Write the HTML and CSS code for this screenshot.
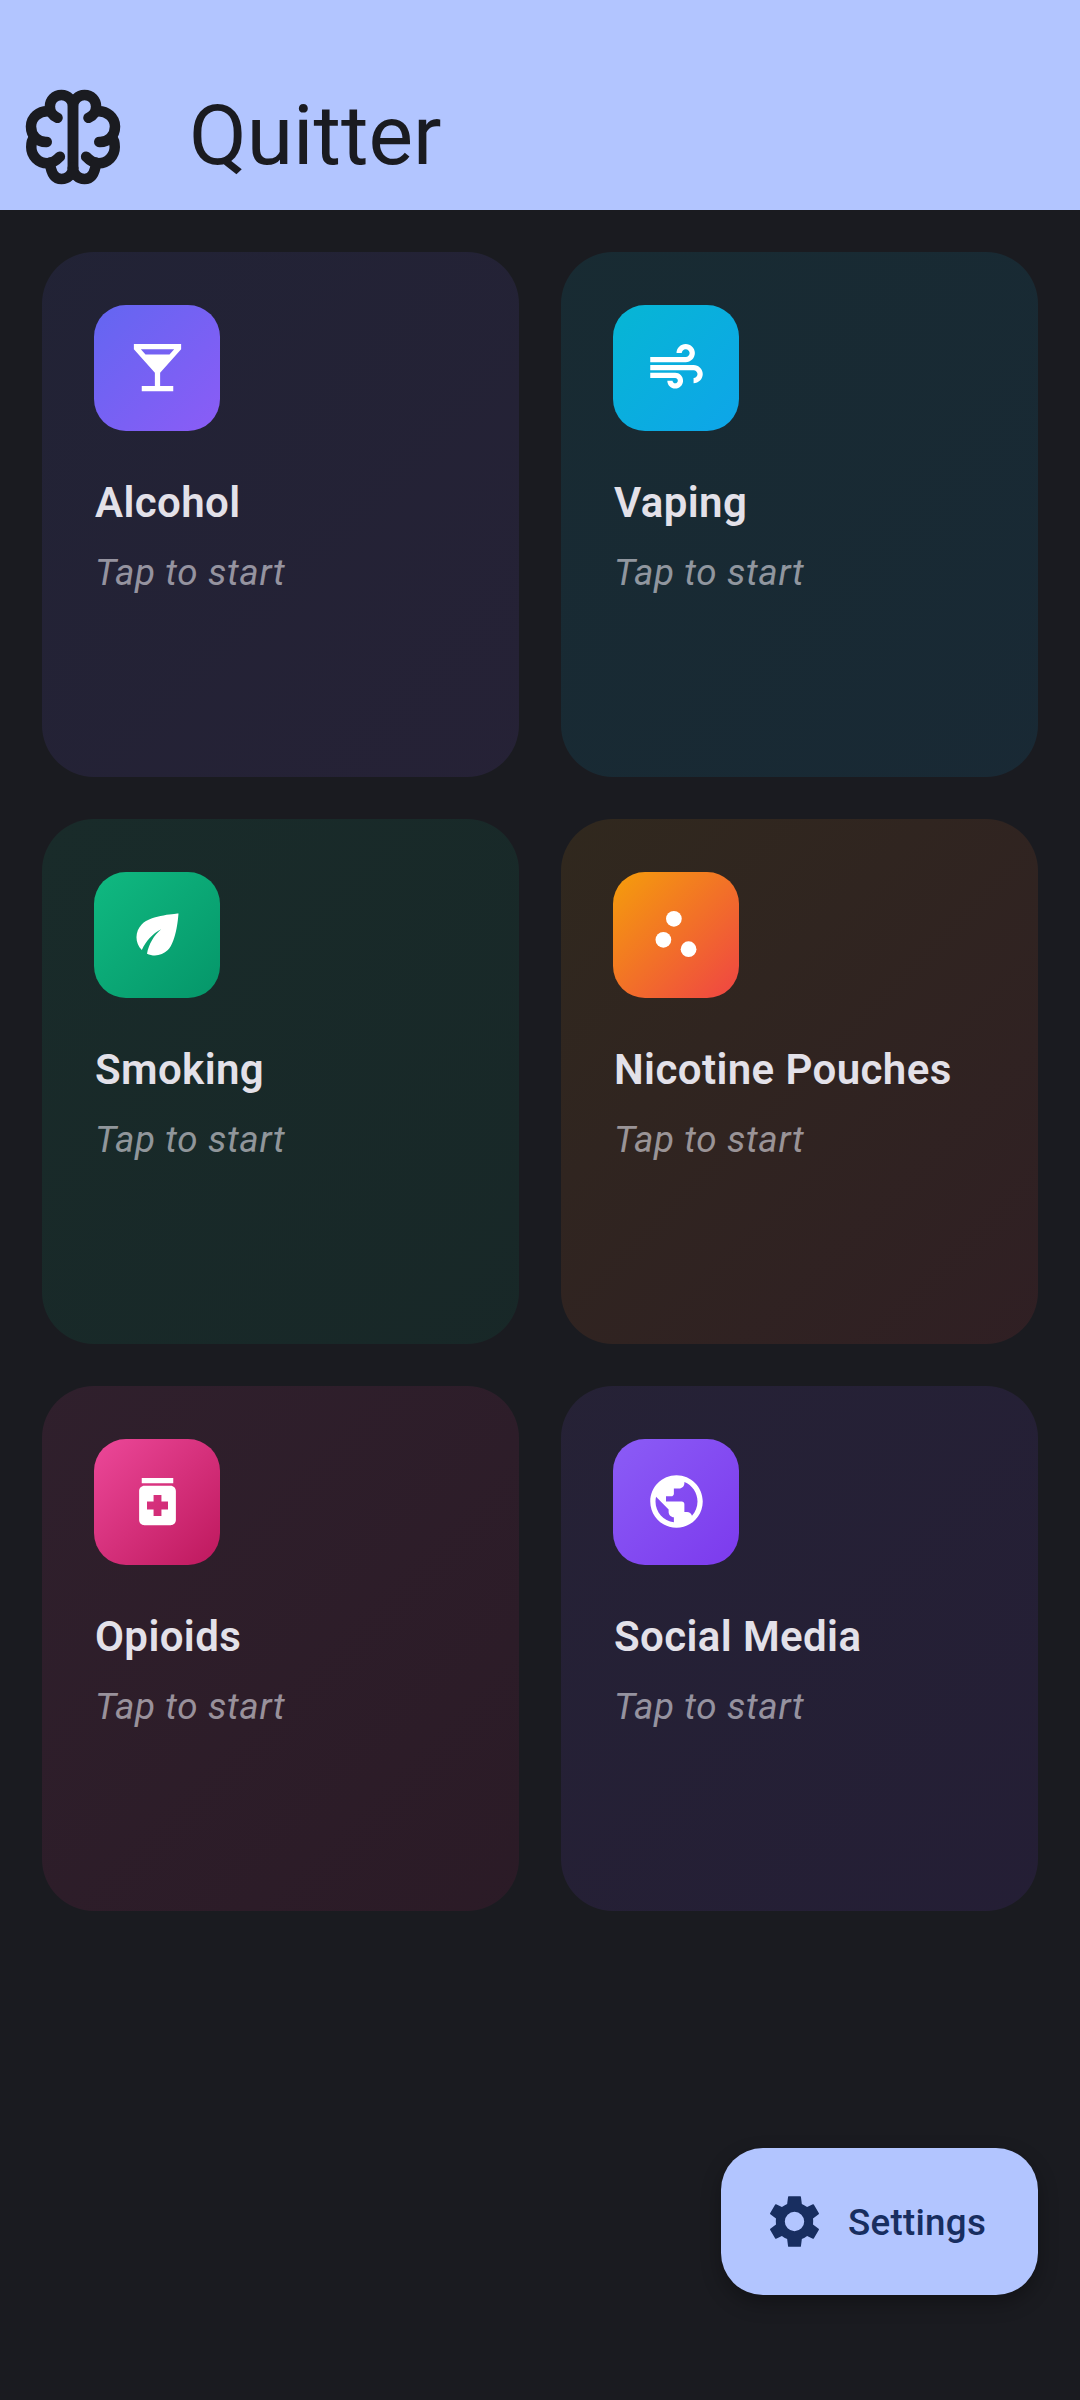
FILE: index.html
```html
<!DOCTYPE html>
<html lang="en">
<head>
<meta charset="utf-8">
<title>Quitter</title>
<link rel="stylesheet" href="styles.css">
</head>
<body>
<header class="app-bar">
  <svg class="logo" viewBox="0 0 24 24">
    <defs>
      <g id="lobe">
        <path d="M12 18V6.2A2.2 2.2 0 0 1 14.2 4C15.5 4 16.4 5 16.4 6.2C16.4 7.4 15.8 8 14.95 8.35"/>
        <path d="M16.5 7.1C18.5 6.9 20 8.3 20 10C20 11.7 18.8 13 17 12.93"/>
        <path d="M19.4 12C19.8 12.5 19.95 13.2 19.95 13.9C19.95 15.6 18.6 17 16.9 17C15.9 17 15.2 16.5 14.5 15.75"/>
        <path d="M16.4 16.9C16.2 18.8 15.5 20 14.2 20C13 20 12 19.1 12 17.8"/>
      </g>
    </defs>
    <use href="#lobe"/>
    <use href="#lobe" transform="matrix(-1 0 0 1 24 0)"/>
  </svg>
  <h1 class="title">Quitter</h1>
</header>
<main class="grid">
  <section class="card alcohol">
    <div class="tile"><svg viewBox="0 0 24 24"><path d="M21 5V3H3v2l8 9v5H6v2h12v-2h-5v-5l8-9zM7.43 7L5.66 5h12.69l-1.78 2H7.43z"/></svg></div>
    <h2 class="name">Alcohol</h2>
    <p class="hint">Tap to start</p>
  </section>
  <section class="card vaping">
    <div class="tile"><svg viewBox="0 0 24 24"><path d="M14.500 17c0 1.650-1.350 3-3 3s-3-1.350-3-3h2c0 .550.450 1 1 1s1-.450 1-1-.450-1-1-1H2v-2h9.500c1.650 0 3 1.350 3 3zM19 6.500C19 4.570 17.430 3 15.500 3S12 4.570 12 6.500h2c0-.830.670-1.500 1.500-1.500s1.500.670 1.500 1.500S16.330 8 15.500 8H2v2h13.500c1.930 0 3.500-1.570 3.500-3.500zM18.500 11H2v2h16.500c.830 0 1.500.670 1.500 1.500s-.670 1.500-1.500 1.500v2c1.930 0 3.500-1.570 3.500-3.500S20.430 11 18.500 11z"/></svg></div>
    <h2 class="name">Vaping</h2>
    <p class="hint">Tap to start</p>
  </section>
  <section class="card smoking">
    <div class="tile"><svg viewBox="0 0 24 24"><path d="M6.050 8.050c-2.730 2.730-2.730 7.150-.020 9.880 1.470-3.400 4.090-6.240 7.360-7.930-2.770 2.340-4.710 5.610-5.390 9.320 2.600 1.230 5.800.780 7.950-1.370C19.430 14.470 20 4 20 4S9.530 4.570 6.050 8.050z"/></svg></div>
    <h2 class="name">Smoking</h2>
    <p class="hint">Tap to start</p>
  </section>
  <section class="card pouches">
    <div class="tile"><svg viewBox="0 0 24 24"><circle cx="7" cy="14" r="3"/><circle cx="11" cy="6" r="3"/><circle cx="16.600" cy="17.600" r="3"/></svg></div>
    <h2 class="name">Nicotine Pouches</h2>
    <p class="hint">Tap to start</p>
  </section>
  <section class="card opioids">
    <div class="tile"><svg viewBox="0 0 24 24"><path d="M6 3h12v2H6zM17 6H7c-1.100 0-2 .900-2 2v11c0 1.100.900 2 2 2h10c1.100 0 2-.900 2-2V8c0-1.100-.900-2-2-2zm-1 9h-2.500v2.500h-3V15H8v-3h2.500V9.500h3V12H16v3z"/></svg></div>
    <h2 class="name">Opioids</h2>
    <p class="hint">Tap to start</p>
  </section>
  <section class="card social">
    <div class="tile"><svg viewBox="0 0 24 24"><path d="M12 2C6.480 2 2 6.480 2 12s4.480 10 10 10 10-4.480 10-10S17.520 2 12 2zm-1 17.930c-3.950-.490-7-3.850-7-7.930 0-.620.080-1.210.210-1.790L9 15v1c0 1.100.900 2 2 2v1.930zm6.900-2.540c-.260-.810-1-1.390-1.900-1.390h-1v-3c0-.550-.450-1-1-1H8v-2h2c.550 0 1-.450 1-1V7h2c1.100 0 2-.900 2-2v-.410c2.930 1.190 5 4.060 5 7.410 0 2.080-.800 3.970-2.100 5.390z"/></svg></div>
    <h2 class="name">Social Media</h2>
    <p class="hint">Tap to start</p>
  </section>
</main>
<button class="fab">
  <svg viewBox="-12 -12 24 24"><path fill-rule="evenodd" d="M-2.200-9.650H2.200Q2.400-9.650 2.450-9.400L2.800-6.700Q3.900-6.250 4.800-5.500L7-6.550Q7.200-6.650 7.350-6.450L9.300-3.100Q9.400-2.900 9.200-2.750L7.050-1.100Q7.200 0 7.050 1.100L9.200 2.750Q9.400 2.900 9.300 3.100L7.350 6.450Q7.200 6.650 7 6.550L4.800 5.500Q3.900 6.250 2.800 6.700L2.450 9.400Q2.400 9.650 2.200 9.650H-2.200Q-2.400 9.650-2.450 9.400L-2.800 6.700Q-3.900 6.250-4.800 5.500L-7 6.550Q-7.200 6.650-7.350 6.450L-9.300 3.100Q-9.400 2.900-9.200 2.750L-7.050 1.100Q-7.200 0-7.050-1.100L-9.200-2.750Q-9.400-2.900-9.300-3.100L-7.350-6.450Q-7.200-6.650-7-6.550L-4.800-5.500Q-3.900-6.250-2.800-6.700L-2.450-9.400Q-2.400-9.650-2.200-9.650ZM3.700 0A3.700 3.700 0 1 0-3.700 0A3.700 3.700 0 1 0 3.700 0Z"/></svg>
  <span>Settings</span>
</button>
</body>
</html>
```
FILE: styles.css
```css
* { box-sizing: border-box; }

body {
  margin: 0;
  min-height: 2400px;
  display: flex;
  flex-direction: column;
  background: #1a1b20;
  color: #e3e1e9;
  font-family: Roboto, sans-serif;
}

h1, h2, p { margin: 0; }

.app-bar {
  height: 210px;
  padding: 62px 10px 0;
  display: flex;
  align-items: center;
  gap: 53px;
  background: #b2c5ff;
  color: #1a1b20;
}

.logo {
  width: 126px;
  height: 126px;
  margin-top: 1px;
  fill: none;
  stroke: #1a1b20;
  stroke-width: 2;
  stroke-linecap: round;
  stroke-linejoin: round;
}

.title {
  font-size: 84px;
  font-weight: 400;
  line-height: 100px;
}

.grid {
  display: grid;
  grid-template-columns: 1fr 1fr;
  grid-auto-rows: 525px;
  gap: 42px;
  padding: 42px;
}

.card {
  padding: 53px 52px;
  border-radius: 52px;
}

.tile {
  width: 126px;
  height: 126px;
  padding-bottom: 1px;
  display: grid;
  place-items: center;
  border-radius: 32px;
}

.tile svg, .fab svg {
  width: 63px;
  height: 63px;
  fill: #fff;
}

.name {
  margin: 42px 0 0 1px;
  font-size: 42px;
  font-weight: 600;
  line-height: 60px;
  letter-spacing: 0.4px;
}

.hint {
  margin: 15px 0 0 1px;
  font-size: 36.75px;
  font-style: italic;
  line-height: 50px;
  letter-spacing: 0.66px;
  color: rgba(227, 225, 233, 0.6);
}

.alcohol { background: linear-gradient(135deg, #6366f11a, #8b5cf61a); }
.alcohol .tile { background: linear-gradient(135deg, #6366f1, #8b5cf6); }
.vaping { background: linear-gradient(135deg, #06b6d41a, #0ea5e91a); }
.vaping .tile { background: linear-gradient(135deg, #06b6d4, #0ea5e9); }
.smoking { background: linear-gradient(135deg, #10b9811a, #0596691a); }
.smoking .tile { background: linear-gradient(135deg, #10b981, #059669); }
.pouches { background: linear-gradient(135deg, #f59e0b1a, #ef44441a); }
.pouches .tile { background: linear-gradient(135deg, #f59e0b, #ef4444); }
.opioids { background: linear-gradient(135deg, #ec48991a, #be185d1a); }
.opioids .tile { background: linear-gradient(135deg, #ec4899, #be185d); }
.social { background: linear-gradient(135deg, #8b5cf61a, #7c3aed1a); }
.social .tile { background: linear-gradient(135deg, #8b5cf6, #7c3aed); }

.fab {
  width: 317px;
  height: 147px;
  margin: auto 42px 105px auto;
  padding: 0 0 0 42px;
  display: flex;
  align-items: center;
  gap: 22px;
  border: 0;
  border-radius: 42px;
  background: #b2c5ff;
  color: #182e60;
  font: 500 36.75px Roboto, sans-serif;
  letter-spacing: 0.26px;
  box-shadow: 0 8px 20px rgba(0, 0, 0, 0.3);
}

.fab svg { fill: #182e60; }

.fab span { padding-top: 2px; }
```
